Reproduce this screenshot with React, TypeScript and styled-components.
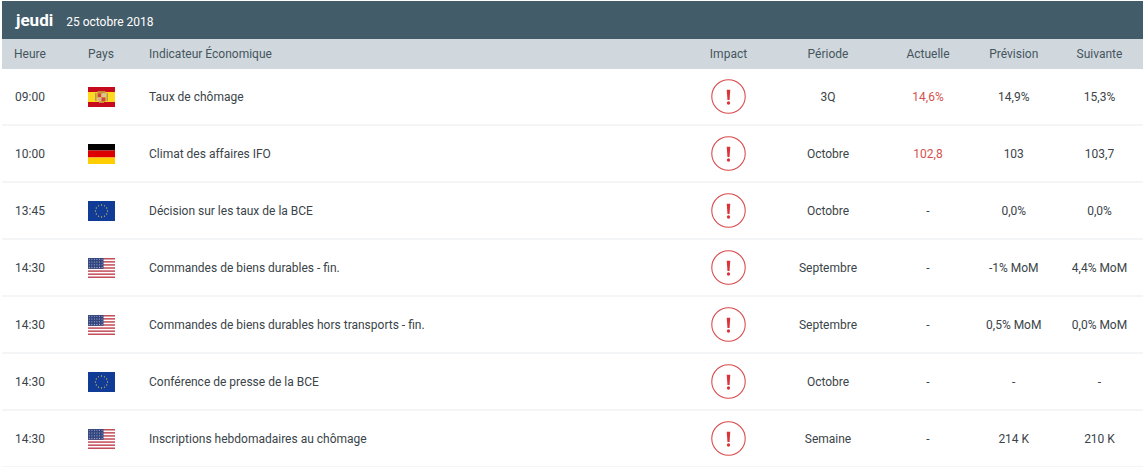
import React from "react";
import styled, { createGlobalStyle } from "styled-components";

const Global = createGlobalStyle`
  html, body { margin: 0; padding: 0; background: #fff; }
  body { font-family: Roboto, "Liberation Sans", sans-serif; overflow: hidden; }
`;

const COLS = "56px 86px 542px 85px 114px 86px 85.5px 86px";

const Page = styled.div`
  width: 1143px;
  height: 467px;
  padding: 1px 0 0 2px;
  box-sizing: border-box;
  overflow: hidden;
`;
const DayBar = styled.div`
  height: 38px;
  box-sizing: border-box;
  background: #435c69;
  display: flex;
  align-items: baseline;
  padding: 9px 0 0 14px;
  gap: 13px;
  color: #fff;
`;
const DayName = styled.span`
  font-size: 17px;
  font-weight: 700;
`;
const DayDate = styled.span`
  font-size: 12px;
  font-weight: 400;
`;
const HeadRow = styled.div`
  height: 30px;
  display: grid;
  grid-template-columns: ${COLS};
  align-items: center;
  background: #d0d8dd;
  color: #45555e;
  font-size: 12px;
`;
const Row = styled.div`
  height: 55px;
  display: grid;
  grid-template-columns: ${COLS};
  align-items: center;
  background: #fff;
  border-bottom: 2px solid #f4f5f6;
  color: #3a4449;
  font-size: 12px;
`;
const Cell = styled.div<{ $red?: boolean }>`
  text-align: center;
  color: ${(p) => (p.$red ? "#d4524e" : "inherit")};
  display: flex;
  justify-content: center;
  align-items: center;
  white-space: nowrap;
`;
const Name = styled.div`
  padding-left: 5px;
  white-space: nowrap;
`;

const Stripes = ({ colors }: { colors: [string, number][] }) => {
  let y = 0;
  return (
    <>
      {colors.map(([c, h], i) => {
        const el = <rect key={i} x="0" y={y} width="27" height={h} fill={c} />;
        y += h;
        return el;
      })}
    </>
  );
};

const FlagSvg = styled.svg`
  display: block;
  width: 27px;
  height: 20px;
`;

const Spain = () => (
  <FlagSvg viewBox="0 0 27 20">
    <Stripes colors={[["#c60b1e", 5], ["#ffd820", 10], ["#c60b1e", 5]]} />
    <rect x="7" y="6" width="1.6" height="8" fill="#b49a5c" />
    <rect x="18.4" y="6" width="1.6" height="8" fill="#b49a5c" />
    <rect x="9.5" y="4" width="8" height="2.4" fill="#c98a3a" />
    <rect x="9.5" y="6.4" width="4" height="4" fill="#c9483a" />
    <rect x="13.5" y="6.4" width="4" height="4" fill="#dcc3a0" />
    <rect x="9.5" y="10.4" width="4" height="4" fill="#dcb09a" />
    <rect x="13.5" y="10.4" width="4" height="4" fill="#c9483a" />
    <rect x="11" y="14.4" width="5" height="1.6" fill="#c98a3a" />
  </FlagSvg>
);
const Germany = () => (
  <FlagSvg viewBox="0 0 27 20">
    <Stripes colors={[["#000", 6.5], ["#dd0000", 7], ["#ffce00", 6.5]]} />
  </FlagSvg>
);
const Europe = () => (
  <FlagSvg viewBox="0 0 27 20">
    <rect width="27" height="20" fill="#103b96" />
    {Array.from({ length: 12 }, (_, i) => {
      const a = (i * Math.PI) / 6;
      return (
        <circle
          key={i}
          cx={13.5 + 6 * Math.cos(a)}
          cy={10 + 6 * Math.sin(a)}
          r="0.65"
          fill="#c9b75a"
        />
      );
    })}
  </FlagSvg>
);
const Usa = () => (
  <FlagSvg viewBox="0 0 27 20">
    <rect width="27" height="20" fill="#fff" />
    {Array.from({ length: 7 }, (_, i) => (
      <rect key={i} x="0" y={i * 3.08} width="27" height="1.54" fill="#c4505c" />
    ))}
    <rect width="15.5" height="10.8" fill="#33467f" />
    {Array.from({ length: 24 }, (_, i) => (
      <circle
        key={i}
        cx={1.3 + (i % 6) * 2.55}
        cy={1.3 + Math.floor(i / 6) * 2.7}
        r="0.55"
        fill="#aeb8d6"
      />
    ))}
  </FlagSvg>
);

const ImpactIcon = () => (
  <svg width="35" height="35" viewBox="0 0 36 36">
    <circle cx="18" cy="18" r="17.2" fill="none" stroke="#d9484a" strokeWidth="1.1" />
    <path d="M16.2 11h3.6l-.7 10.5h-2.2z" fill="#d9343a" />
    <circle cx="18" cy="24.7" r="1.7" fill="#d9343a" />
  </svg>
);

type Flag = "es" | "de" | "eu" | "us";
const flags: Record<Flag, React.FC> = { es: Spain, de: Germany, eu: Europe, us: Usa };

const rows: {
  time: string;
  flag: Flag;
  name: string;
  period: string;
  actual: string;
  red?: boolean;
  forecast: string;
  next: string;
}[] = [
  { time: "09:00", flag: "es", name: "Taux de chômage", period: "3Q", actual: "14,6%", red: true, forecast: "14,9%", next: "15,3%" },
  { time: "10:00", flag: "de", name: "Climat des affaires IFO", period: "Octobre", actual: "102,8", red: true, forecast: "103", next: "103,7" },
  { time: "13:45", flag: "eu", name: "Décision sur les taux de la BCE", period: "Octobre", actual: "-", forecast: "0,0%", next: "0,0%" },
  { time: "14:30", flag: "us", name: "Commandes de biens durables - fin.", period: "Septembre", actual: "-", forecast: "-1% MoM", next: "4,4% MoM" },
  { time: "14:30", flag: "us", name: "Commandes de biens durables hors transports - fin.", period: "Septembre", actual: "-", forecast: "0,5% MoM", next: "0,0% MoM" },
  { time: "14:30", flag: "eu", name: "Conférence de presse de la BCE", period: "Octobre", actual: "-", forecast: "-", next: "-" },
  { time: "14:30", flag: "us", name: "Inscriptions hebdomadaires au chômage", period: "Semaine", actual: "-", forecast: "214 K", next: "210 K" },
];

export default function App() {
  return (
    <Page>
      <Global />
      <DayBar>
        <DayName>jeudi</DayName>
        <DayDate>25 octobre 2018</DayDate>
      </DayBar>
      <HeadRow>
        <Cell>Heure</Cell>
        <Cell>Pays</Cell>
        <Name>Indicateur Économique</Name>
        <Cell>Impact</Cell>
        <Cell>Période</Cell>
        <Cell>Actuelle</Cell>
        <Cell>Prévision</Cell>
        <Cell>Suivante</Cell>
      </HeadRow>
      {rows.map((r, i) => {
        const F = flags[r.flag];
        return (
          <Row key={i}>
            <Cell>{r.time}</Cell>
            <Cell><F /></Cell>
            <Name>{r.name}</Name>
            <Cell><ImpactIcon /></Cell>
            <Cell>{r.period}</Cell>
            <Cell $red={r.red}>{r.actual}</Cell>
            <Cell>{r.forecast}</Cell>
            <Cell>{r.next}</Cell>
          </Row>
        );
      })}
    </Page>
  );
}
